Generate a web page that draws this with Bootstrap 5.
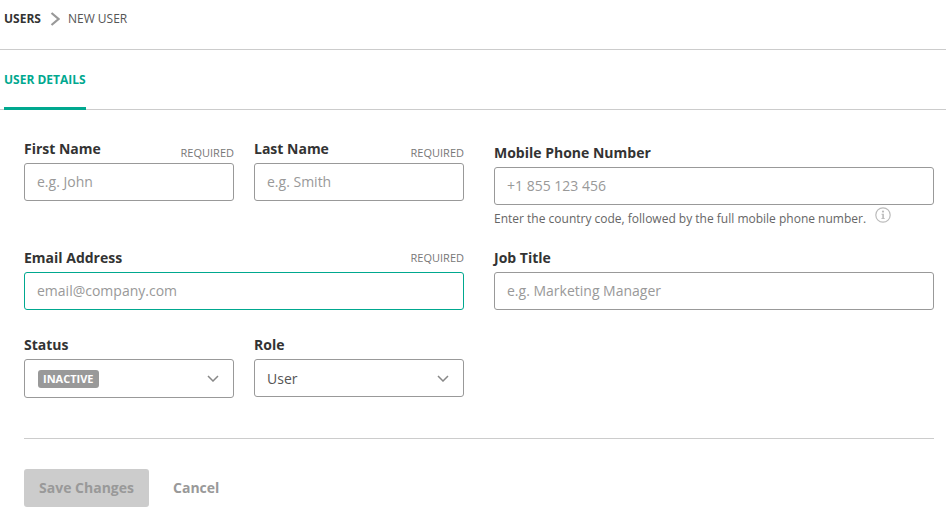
<!DOCTYPE html>
<html lang="en">
<head>
<meta charset="utf-8">
<title>New User</title>
<link href="https://cdn.jsdelivr.net/npm/bootstrap@5.3.0/dist/css/bootstrap.min.css" rel="stylesheet">
<style>
body { font-family: "Open Sans", sans-serif; color: #333; background: #fff; font-size: 14px; }
.crumbs { height: 50px; padding: 0 4px 11px; border-bottom: 1px solid #ccc; font-size: 12px; line-height: 18px; gap: 8px; color: #555; }
.crumbs b { color: #333; font-weight: 700; }
.crumbarrow { margin-left: 1px; }
.tabbar { height: 60px; border-bottom: 1px solid #ccc; padding-left: 4px; }
.tabitem { display: block; width: 82px; height: 60px; line-height: 60px; font-size: 12px; font-weight: 700; color: #00a88f; border-bottom: 3px solid #00a88f; text-decoration: none; white-space: nowrap; }
.formwrap { padding: 29px 12px 0 24px; }
.formgrid { display: grid; grid-template-columns: 440px 440px; column-gap: 30px; }
.pairgrid { display: grid; grid-template-columns: 210px 210px; column-gap: 20px; }
.rowa { margin-bottom: 20px; }
.rowb { margin-bottom: 25px; }
.fieldhead { height: 20px; margin-bottom: 4px; }
.fieldname { font-size: 14px; line-height: 20px; font-weight: 700; color: #333; margin: 0; }
.reqtag { font-size: 11px; line-height: 20px; color: #777; padding-top: 4px; }
.reqflat { padding-top: 0; }
.pushdown { padding-top: 4px; }
.form-control.boxinput { height: 38px; padding: 0 12px 2px; font-size: 14px; border: 1px solid #999; border-radius: 3px; color: #333; font-family: inherit; box-shadow: none; }
.form-control.boxinput::placeholder { color: #999; opacity: 1; }
.form-control.focusedbox { border-color: #00a88f; }
.selectbox { height: 38px; padding: 0 14px 0 12px; font-size: 14px; border: 1px solid #999; border-radius: 3px; color: #555; }
.selecttall { height: 39px; }
.hinttext { font-size: 12px; line-height: 18px; color: #666; margin-top: 5px; gap: 9px; }
.hinticon { margin-top: -9px; }
.statuschip { background: #999; color: #fff; font-size: 11px; font-weight: 700; line-height: 18px; height: 18px; padding: 0 5px; border-radius: 3px; margin-left: 1px; }
.divline { border: 0; border-top: 1px solid #ccc; opacity: 1; margin: 40px 0 30px; }
.btn.savebtn { width: 125px; height: 38px; padding: 0 0 2px; background: #ccc; border: 0; border-radius: 3px; color: #999; font-size: 14px; font-weight: 700; opacity: 1; }
.btn.cancelbtn { padding: 0 0 2px; margin-left: 24px; border: 0; color: #999; font-size: 14px; font-weight: 700; }
</style>
</head>
<body>
<div class="crumbs d-flex align-items-center">
  <b>USERS</b>
  <svg class="crumbarrow" width="10" height="14" viewBox="0 0 10 14" fill="none" stroke="#999" stroke-width="2.2" aria-hidden="true"><path d="M1.5 1 L8.5 7 L1.5 13"/></svg>
  <span>NEW USER</span>
</div>
<div class="tabbar"><a class="tabitem" href="#">USER DETAILS</a></div>
<div class="formwrap">
  <form>
    <div class="formgrid rowa">
      <div class="pairgrid">
        <div>
          <div class="fieldhead d-flex justify-content-between"><label class="fieldname">First Name</label><span class="reqtag">REQUIRED</span></div>
          <input class="form-control boxinput" placeholder="e.g. John">
        </div>
        <div>
          <div class="fieldhead d-flex justify-content-between"><label class="fieldname">Last Name</label><span class="reqtag">REQUIRED</span></div>
          <input class="form-control boxinput" placeholder="e.g. Smith">
        </div>
      </div>
      <div class="pushdown">
        <div class="fieldhead d-flex"><label class="fieldname">Mobile Phone Number</label></div>
        <input class="form-control boxinput" placeholder="+1 855 123 456">
        <div class="hinttext d-flex align-items-center">
          <span>Enter the country code, followed by the full mobile phone number.</span>
          <svg class="hinticon" width="16" height="16" viewBox="0 0 16 16" fill="none" aria-hidden="true"><circle cx="8" cy="8" r="7.2" stroke="#bbb" stroke-width="1.2"/><circle cx="8" cy="4.6" r="1.1" fill="#bbb"/><path d="M6.5 6.8h2.4v4.4h1v.9H6.3v-.9h1V7.7h-.8z" fill="#bbb"/></svg>
        </div>
      </div>
    </div>
    <div class="formgrid rowb">
      <div>
        <div class="fieldhead d-flex justify-content-between"><label class="fieldname">Email Address</label><span class="reqtag reqflat">REQUIRED</span></div>
        <input class="form-control boxinput focusedbox" placeholder="email@company.com">
      </div>
      <div>
        <div class="fieldhead d-flex"><label class="fieldname">Job Title</label></div>
        <input class="form-control boxinput" placeholder="e.g. Marketing Manager">
      </div>
    </div>
    <div class="formgrid">
      <div class="pairgrid">
        <div>
          <div class="fieldhead d-flex"><label class="fieldname">Status</label></div>
          <div class="selectbox selecttall d-flex align-items-center justify-content-between">
            <span class="statuschip">INACTIVE</span>
            <svg width="12" height="7" viewBox="0 0 12 7" fill="none" stroke="#888" stroke-width="1.5" aria-hidden="true"><path d="M1 1l5 5 5-5"/></svg>
          </div>
        </div>
        <div>
          <div class="fieldhead d-flex"><label class="fieldname">Role</label></div>
          <div class="selectbox d-flex align-items-center justify-content-between">
            <span>User</span>
            <svg width="12" height="7" viewBox="0 0 12 7" fill="none" stroke="#888" stroke-width="1.5" aria-hidden="true"><path d="M1 1l5 5 5-5"/></svg>
          </div>
        </div>
      </div>
    </div>
    <hr class="divline">
    <div class="d-flex align-items-center">
      <button type="button" class="btn savebtn" disabled>Save Changes</button>
      <button type="button" class="btn cancelbtn">Cancel</button>
    </div>
  </form>
</div>
<script src="https://cdn.jsdelivr.net/npm/bootstrap@5.3.0/dist/js/bootstrap.bundle.min.js"></script>
</body>
</html>
